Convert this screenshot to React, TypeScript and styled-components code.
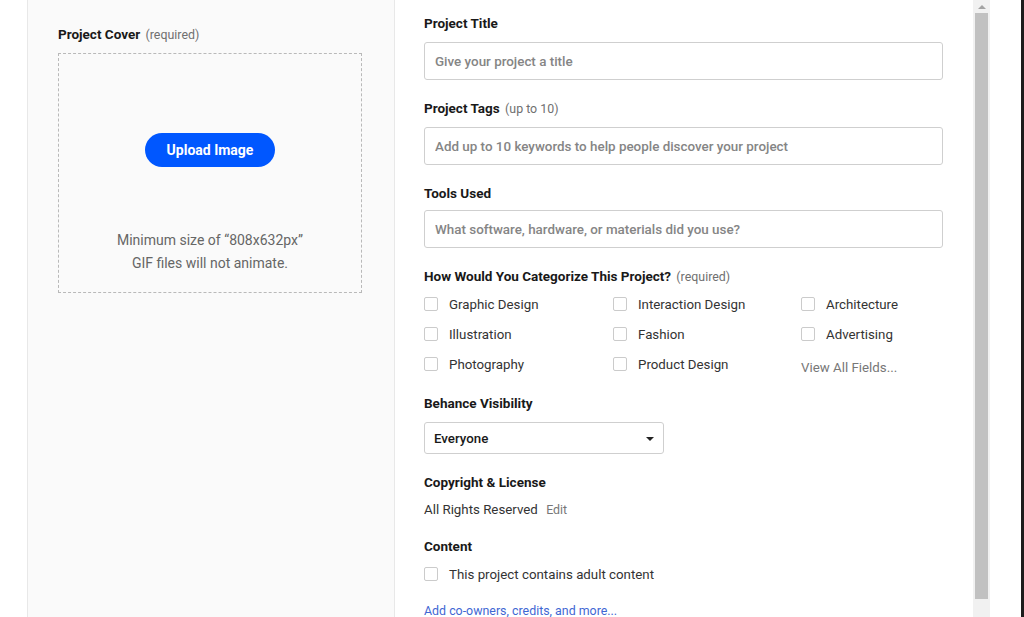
import React from 'react';
import styled, { createGlobalStyle } from 'styled-components';

const GlobalStyle = createGlobalStyle`
  html, body {
    margin: 0;
    padding: 0;
    overflow: hidden;
    background: #fff;
  }
  * { box-sizing: border-box; }
  body {
    font-family: Roboto, "Liberation Sans", Arial, sans-serif;
    color: #191919;
  }
`;

const categories = [
  'Graphic Design', 'Interaction Design', 'Architecture',
  'Illustration', 'Fashion', 'Advertising',
  'Photography', 'Product Design',
];

const Page = () => {
  return (
    <Shell>
      <Gutter />
      <CoverPanel>
        <Label>
          Project Cover <Hint>(required)</Hint>
        </Label>
        <DropZone>
          <UploadButton type="button">Upload Image</UploadButton>
          <DropNote>
            Minimum size of “808x632px”
            <br />
            GIF files will not animate.
          </DropNote>
        </DropZone>
      </CoverPanel>

      <FormPanel>
        <Field>
          <Label>Project Title</Label>
          <TextInput placeholder="Give your project a title" />
        </Field>
        <Field>
          <Label>
            Project Tags <Hint>(up to 10)</Hint>
          </Label>
          <TextInput placeholder="Add up to 10 keywords to help people discover your project" />
        </Field>
        <Field>
          <Label $mb={9}>Tools Used</Label>
          <TextInput placeholder="What software, hardware, or materials did you use?" />
        </Field>
        <Field $after={16}>
          <Label $mb={5}>
            How Would You Categorize This Project? <Hint>(required)</Hint>
          </Label>
          <CategoryGrid>
            {categories.map((c) => (
              <CheckRow key={c}>
                <Box />
                {c}
              </CheckRow>
            ))}
            <MoreLink>View All Fields...</MoreLink>
          </CategoryGrid>
        </Field>
        <Field>
          <Label>Behance Visibility</Label>
          <Select>
            Everyone
            <Caret />
          </Select>
        </Field>
        <Field $after={20}>
          <Label $mb={12}>Copyright &amp; License</Label>
          <License>
            All Rights Reserved <EditLink>Edit</EditLink>
          </License>
        </Field>
        <Field $after={14}>
          <Label $mb={5}>Content</Label>
          <CheckRow>
            <Box />
            This project contains adult content
          </CheckRow>
        </Field>
        <BlueLink>Add co-owners, credits, and more...</BlueLink>
      </FormPanel>

      <Scrollbar>
        <ScrollArrow />
        <Thumb />
      </Scrollbar>
      <RightGap />
      <DarkEdge />
    </Shell>
  );
};

export default function App() {
  return (
    <>
      <GlobalStyle />
      <Page />
    </>
  );
}

const Shell = styled.div`
  display: flex;
  width: 1024px;
  height: 617px;
  overflow: hidden;
`;

const Gutter = styled.div`
  width: 27px;
  flex-shrink: 0;
  background: #fff;
`;

const CoverPanel = styled.div`
  width: 368px;
  flex-shrink: 0;
  background: #fafafa;
  border-left: 1px solid #e8e8e8;
  border-right: 1px solid #e8e8e8;
  padding: 26px 32px 0 30px;
`;

const FormPanel = styled.div`
  width: 578px;
  flex-shrink: 0;
  background: #fff;
  padding: 15px 30px 0 29px;
  display: flex;
  flex-direction: column;
`;

const Field = styled.div<{ $after?: number }>`
  display: flex;
  flex-direction: column;
  margin-bottom: ${(p) => (p.$after ?? 20)}px;
`;

const Label = styled.div<{ $mb?: number }>`
  height: 16px;
  font-size: 13.5px;
  line-height: 16px;
  font-weight: 700;
  color: #191919;
  margin-bottom: ${(p) => (p.$mb ?? 11)}px;
  white-space: nowrap;
`;

const Hint = styled.span`
  font-size: 12.4px;
  line-height: 1;
  font-weight: 400;
  color: #707070;
  margin-left: 2px;
`;

const DropZone = styled.div`
  width: 304px;
  height: 240px;
  border: 1px dashed #b9b9b9;
  display: flex;
  flex-direction: column;
  align-items: center;
  padding-top: 79px;
`;

const UploadButton = styled.button`
  width: 130px;
  height: 34px;
  border: none;
  border-radius: 17px;
  background: #0057ff;
  color: #fff;
  font-family: Roboto, "Liberation Sans", Arial, sans-serif;
  font-size: 14px;
  font-weight: 700;
  cursor: pointer;
`;

const DropNote = styled.div`
  margin-top: 62px;
  font-size: 14px;
  line-height: 23px;
  color: #666;
  text-align: center;
`;

const TextInput = styled.input`
  width: 100%;
  height: 38px;
  border: 1px solid #cfcfcf;
  border-radius: 3px;
  padding: 0 10px;
  font-family: Roboto, "Liberation Sans", Arial, sans-serif;
  font-size: 13.4px;
  font-weight: 500;
  color: #191919;
  outline: none;

  &::placeholder {
    color: #858585;
  }
`;

const CategoryGrid = styled.div`
  display: grid;
  grid-template-columns: 189px 188px 1fr;
  grid-auto-rows: 30px;
`;

const CheckRow = styled.label`
  display: flex;
  align-items: center;
  gap: 11px;
  height: 30px;
  font-size: 13.3px;
  color: #333;
  white-space: nowrap;
`;

const Box = styled.span`
  width: 14px;
  height: 14px;
  border: 1px solid #cbcbcb;
  border-radius: 2px;
  background: #fff;
  flex-shrink: 0;
`;

const MoreLink = styled.span`
  display: flex;
  align-items: center;
  padding-top: 6px;
  font-size: 13.3px;
  color: #777;
`;

const Select = styled.div`
  position: relative;
  width: 240px;
  height: 32px;
  border: 1px solid #cfcfcf;
  border-radius: 3px;
  padding: 0 9px;
  display: flex;
  align-items: center;
  font-size: 13.3px;
  font-weight: 500;
  color: #191919;
`;

const Caret = styled.span`
  position: absolute;
  right: 9px;
  top: 14px;
  width: 0;
  height: 0;
  border-left: 4px solid transparent;
  border-right: 4px solid transparent;
  border-top: 4px solid #222;
`;

const License = styled.div`
  height: 16px;
  font-size: 13.3px;
  line-height: 16px;
  color: #333;
`;

const EditLink = styled.span`
  font-size: 12.4px;
  line-height: 1;
  color: #777;
  margin-left: 5px;
`;

const BlueLink = styled.span`
  font-size: 12.4px;
  line-height: 16px;
  color: #3f67d3;
`;

const Scrollbar = styled.div`
  width: 17px;
  flex-shrink: 0;
  background: #f1f1f1;
  display: flex;
  flex-direction: column;
  align-items: center;
`;

const ScrollArrow = styled.span`
  margin-top: 5px;
  width: 0;
  height: 0;
  border-left: 4px solid transparent;
  border-right: 4px solid transparent;
  border-bottom: 4px solid #a3a3a3;
`;

const Thumb = styled.div`
  margin-top: 4px;
  width: 13px;
  height: 586px;
  background: #c1c1c1;
`;

const RightGap = styled.div`
  width: 31px;
  flex-shrink: 0;
  background: #fff;
`;

const DarkEdge = styled.div`
  width: 3px;
  flex-shrink: 0;
  background: #1c1c1c;
`;
